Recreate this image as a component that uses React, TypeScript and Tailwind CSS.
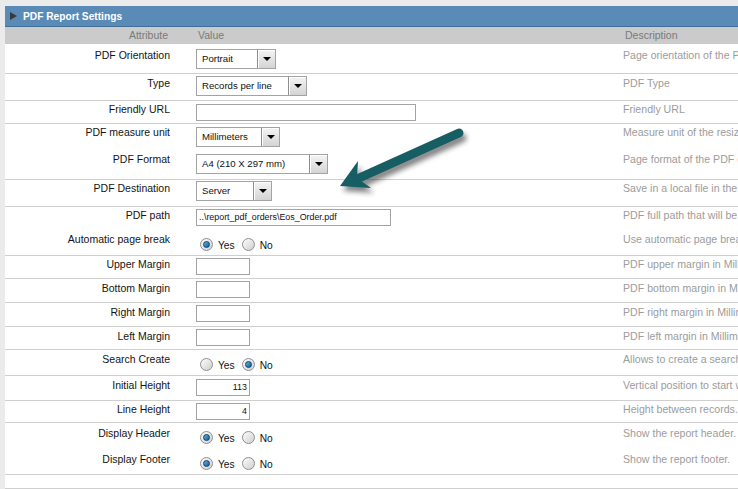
import React from 'react'

type RowDef = {
  label: string
  h: string
  lpt: string
  vpt: string
  border: boolean
  value: React.ReactNode
  desc: string
}

function Select({ text, w }: { text: string; w: string }) {
  return (
    <div className={`flex h-[20px] ${w} border border-[#a3a3a3] bg-white text-[9.6px]`}>
      <span className="flex-1 pl-[5px] leading-[18px] text-[#111]">{text}</span>
      <span className="flex h-full w-[18px] items-center justify-center border-l border-[#8e8e8e] bg-gradient-to-b from-[#f4f4f4] to-[#d4d4d4] shadow-[inset_1px_1px_0_#ffffff]">
        <span className="h-0 w-0 border-x-[4px] border-t-[4px] border-x-transparent border-t-black" />
      </span>
    </div>
  )
}

function Input({ value = '', w, right = false }: { value?: string; w: string; right?: boolean }) {
  return (
    <div
      className={`h-[17px] ${w} border border-[#a3a3a3] bg-white px-[2px] text-[8.9px] leading-[15px] text-[#111] ${right ? 'text-right' : ''}`}
    >
      {value}
    </div>
  )
}

function Radio({ checked }: { checked: boolean }) {
  return (
    <span className="flex h-[13px] w-[13px] items-center justify-center rounded-full border border-[#8f8f8f] bg-gradient-to-br from-[#fdfdfd] to-[#cfcfcf]">
      {checked && (
        <span className="h-[7px] w-[7px] rounded-full border border-[#0e3f63] bg-gradient-to-br from-[#5fb3e6] to-[#0b5d9a]" />
      )}
    </span>
  )
}

function YesNo({ yes }: { yes: boolean }) {
  return (
    <div className="flex items-center pl-[4px] text-[10.2px] text-[#111]">
      <Radio checked={yes} />
      <span className="ml-[5px] pt-[2px]">Yes</span>
      <span className="ml-[7px]">
        <Radio checked={!yes} />
      </span>
      <span className="ml-[5px] pt-[2px]">No</span>
    </div>
  )
}

const rows: RowDef[] = [
  { label: 'PDF Orientation', h: 'h-[30px]', lpt: 'pt-[5px]', vpt: 'pt-[5px]', border: true, value: <Select text="Portrait" w="w-[80px]" />, desc: 'Page orientation of the PDF file.' },
  { label: 'Type', h: 'h-[27px]', lpt: 'pt-[3px]', vpt: 'pt-[2px]', border: true, value: <Select text="Records per line" w="w-[111px]" />, desc: 'PDF Type' },
  { label: 'Friendly URL', h: 'h-[23px]', lpt: 'pt-[2px]', vpt: 'pt-[3px]', border: true, value: <Input w="w-[220px]" />, desc: 'Friendly URL' },
  { label: 'PDF measure unit', h: 'h-[27px]', lpt: 'pt-[2px]', vpt: 'pt-[3px]', border: false, value: <Select text="Millimeters" w="w-[84px]" />, desc: 'Measure unit of the resized values.' },
  { label: 'PDF Format', h: 'h-[29px]', lpt: 'pt-[2px]', vpt: 'pt-[3px]', border: true, value: <Select text="A4 (210 X 297 mm)" w="w-[132px]" />, desc: 'Page format of the PDF document.' },
  { label: 'PDF Destination', h: 'h-[27px]', lpt: 'pt-[2px]', vpt: 'pt-[1px]', border: true, value: <Select text="Server" w="w-[76px]" />, desc: 'Save in a local file in the server.' },
  { label: 'PDF path', h: 'h-[24px]', lpt: 'pt-[2px]', vpt: 'pt-[2px]', border: false, value: <Input value="..\report_pdf_orders\Eos_Order.pdf" w="w-[195px]" />, desc: 'PDF full path that will be saved.' },
  { label: 'Automatic page break', h: 'h-[25px]', lpt: 'pt-[2px]', vpt: 'pt-[6px]', border: true, value: <YesNo yes />, desc: 'Use automatic page break.' },
  { label: 'Upper Margin', h: 'h-[23px]', lpt: 'pt-[2px]', vpt: 'pt-[2px]', border: true, value: <Input w="w-[54px]" />, desc: 'PDF upper margin in Millimeters.' },
  { label: 'Bottom Margin', h: 'h-[24px]', lpt: 'pt-[3px]', vpt: 'pt-[2px]', border: true, value: <Input w="w-[54px]" />, desc: 'PDF bottom margin in Millimeters.' },
  { label: 'Right Margin', h: 'h-[24px]', lpt: 'pt-[3px]', vpt: 'pt-[2px]', border: true, value: <Input w="w-[54px]" />, desc: 'PDF right margin in Millimeters.' },
  { label: 'Left Margin', h: 'h-[23px]', lpt: 'pt-[3px]', vpt: 'pt-[2px]', border: true, value: <Input w="w-[54px]" />, desc: 'PDF left margin in Millimeters.' },
  { label: 'Search Create', h: 'h-[26px]', lpt: 'pt-[3px]', vpt: 'pt-[7px]', border: true, value: <YesNo yes={false} />, desc: 'Allows to create a search form.' },
  { label: 'Initial Height', h: 'h-[25px]', lpt: 'pt-[3px]', vpt: 'pt-[3px]', border: true, value: <Input value="113" w="w-[54px]" right />, desc: 'Vertical position to start writing.' },
  { label: 'Line Height', h: 'h-[22px]', lpt: 'pt-[2px]', vpt: 'pt-[2px]', border: true, value: <Input value="4" w="w-[54px]" right />, desc: 'Height between records.' },
  { label: 'Display Header', h: 'h-[26px]', lpt: 'pt-[4px]', vpt: 'pt-[7px]', border: false, value: <YesNo yes />, desc: 'Show the report header.' },
  { label: 'Display Footer', h: 'h-[26px]', lpt: 'pt-[4px]', vpt: 'pt-[7px]', border: true, value: <YesNo yes />, desc: 'Show the report footer.' },
]

export default function App() {
  return (
    <div className="relative h-[489px] w-[738px] overflow-hidden bg-[#ebebeb] pl-[5px] pt-[6px] font-['Liberation_Sans',Arial,sans-serif] text-[10.5px] leading-[13px]">
      <div className="w-[900px] bg-white">
        {/* Panel title */}
        <div className="flex h-[21px] items-center border-b border-[#3f6e96] bg-[#5a8bb7] pl-[5px]">
          <span className="h-0 w-0 border-y-[4px] border-l-[7px] border-y-transparent border-l-[#3a3a3a]" />
          <span className="ml-[6px] text-[10.2px] font-bold text-white">PDF Report Settings</span>
        </div>

        {/* Column headings */}
        <div className="flex h-[17px] items-center bg-[#cbcbcb] text-[#7a7a7a]">
          <div className="w-[163px] text-right">Attribute</div>
          <div className="w-[455px] pl-[30px]">Value</div>
          <div className="pl-[2px]">Description</div>
        </div>

        {rows.map((r) => (
          <div key={r.label} className={`flex ${r.h} ${r.border ? 'border-b border-[#cfcfcf]' : ''}`}>
            <div className={`w-[165px] shrink-0 text-right text-[#141414] ${r.lpt}`}>{r.label}</div>
            <div className={`w-[453px] shrink-0 pl-[26px] ${r.vpt}`}>{r.value}</div>
            <div className={`whitespace-nowrap text-[10.6px] text-[#9c9c9c] ${r.lpt}`}>{r.desc}</div>
          </div>
        ))}

        <div className="h-[14px] border-b border-[#cfcfcf]" />
      </div>

      {/* Annotation arrow */}
      <svg className="pointer-events-none absolute left-0 top-0" width="738" height="489" viewBox="0 0 738 489">
        <defs>
          <filter id="arrowShadow" x="-20%" y="-40%" width="140%" height="180%">
            <feGaussianBlur stdDeviation="2.5" />
          </filter>
        </defs>
        <g transform="translate(3 5)" filter="url(#arrowShadow)" opacity="0.55">
          <line x1="459" y1="133" x2="357" y2="179" stroke="#222" strokeWidth="9" strokeLinecap="round" />
          <polygon points="340,186 358,161 357,178 371,188" fill="#222" />
        </g>
        <line x1="459" y1="133" x2="357" y2="179" stroke="#175e64" strokeWidth="9" strokeLinecap="round" />
        <polygon points="340,186 358,161 357,178 371,188" fill="#175e64" />
      </svg>
    </div>
  )
}
